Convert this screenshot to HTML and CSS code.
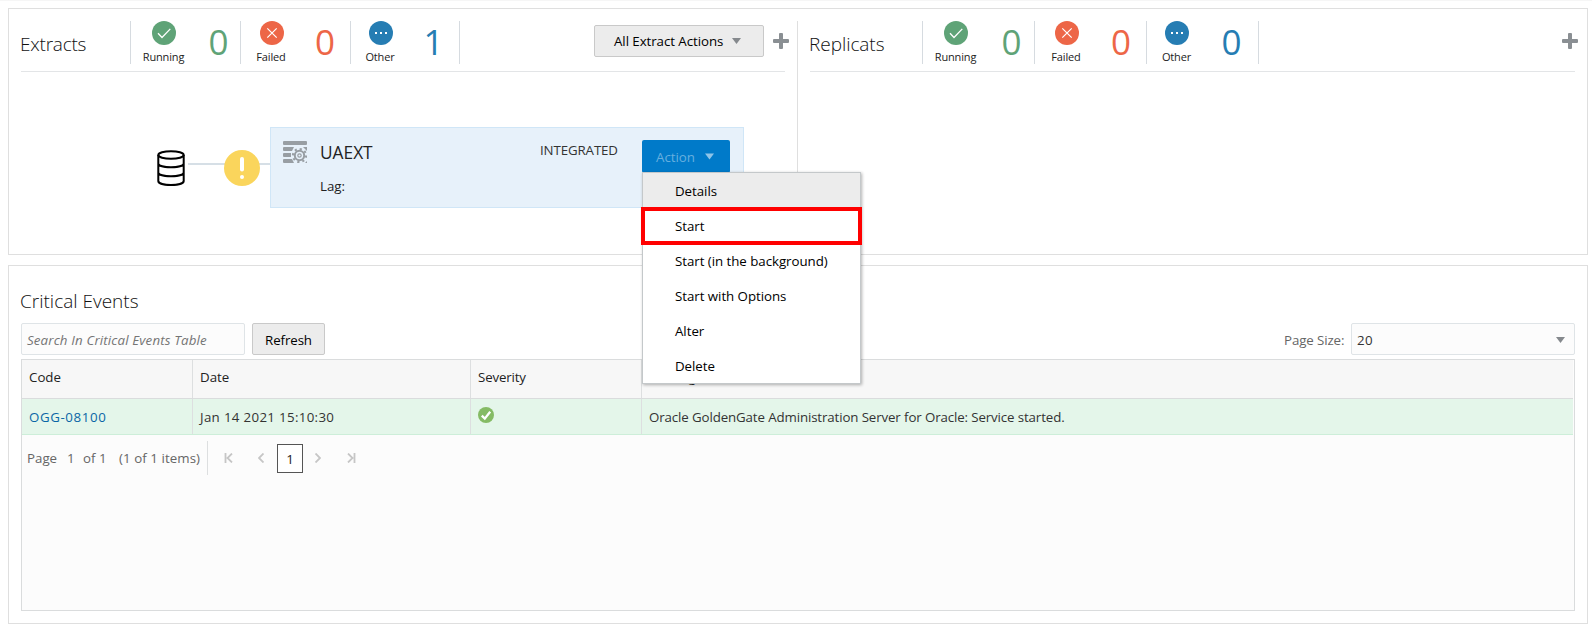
FILE: index.html
```html
<!DOCTYPE html>
<html lang="en">
<head>
<meta charset="utf-8">
<title>Administration Server</title>
<link rel="stylesheet" href="styles.css">
</head>
<body>
<svg class="defs" width="0" height="0">
  <symbol id="ok" viewBox="0 0 24 24"><circle cx="12" cy="12" r="12" fill="#5fa377"/><path d="M6 12.3l4 4.2 8.3-8.6" fill="none" stroke="#fff" stroke-width="1.3"/></symbol>
  <symbol id="fail" viewBox="0 0 24 24"><circle cx="12" cy="12" r="12" fill="#ed6647"/><path d="M7.3 7.3l9.4 9.4M16.7 7.3l-9.4 9.4" fill="none" stroke="#fff" stroke-width="1.2"/></symbol>
  <symbol id="other" viewBox="0 0 24 24"><circle cx="12" cy="12" r="12" fill="#267db3"/><path d="M6 11h2v2h-2zM11 11h2v2h-2zM16 11h2v2h-2z" fill="#fff"/></symbol>
  <symbol id="plus" viewBox="0 0 16 16"><path d="M7 0h2q1 0 1 1v5h5q1 0 1 1v2q0 1-1 1h-5v5q0 1-1 1h-2q-1 0-1-1v-5h-5q-1 0-1-1v-2q0-1 1-1h5v-5q0-1 1-1z" fill="#8a8f93"/></symbol>
  <symbol id="caret" viewBox="0 0 9 6"><path d="M0 0h9l-4.5 6z" fill="currentColor"/></symbol>
</svg>

<section class="box processes">
  <div class="panel extracts">
    <header class="panel-head">
      <h2 class="title"><span class="t-extracts">Extracts</span></h2>
      <div class="stats">
        <div class="stat running"><div class="kind"><svg><use href="#ok"/></svg><span class="l-run">Running</span></div><b>0</b></div>
        <div class="stat failed"><div class="kind"><svg><use href="#fail"/></svg><span class="l-fail">Failed</span></div><b>0</b></div>
        <div class="stat other"><div class="kind"><svg><use href="#other"/></svg><span class="l-other">Other</span></div><b>1</b></div>
      </div>
      <div class="tools">
        <button class="btn all-actions"><span>All Extract Actions</span><svg class="caret"><use href="#caret"/></svg></button>
        <svg class="plus"><use href="#plus"/></svg>
      </div>
    </header>
    <div class="flow">
      <svg class="source" width="114" height="81" viewBox="156 127 114 81">
        <path d="M188 164h82" stroke="#d6dfe6" stroke-width="2"/>
        <g fill="none" stroke="#000" stroke-width="2">
          <ellipse cx="171" cy="155" rx="12.7" ry="3.8"/>
          <path d="M158.300 155v26c0 5.300 25.400 5.300 25.400 0v-26M158.300 163.500c0 5 25.400 5 25.400 0M158.300 172.500c0 5 25.400 5 25.400 0"/>
        </g>
        <circle cx="242" cy="168" r="18" fill="#fad55c"/>
        <path d="M242 159v10.500" stroke="#fff" stroke-width="4" stroke-linecap="round"/>
        <circle cx="242" cy="177" r="2" fill="#fff"/>
      </svg>
      <article class="card">
        <svg class="proc" width="24" height="23" viewBox="0 0 24 23">
          <g fill="#989ea3"><rect width="24" height="4" rx="1"/><path d="M0 7q0-1 1-1h10l-2 4h-8q-1 0-1-1zM0 13q0-1 1-1h7v4h-7q-1 0-1-1zM0 19q0-1 1-1h8l2 4h-10q-1 0-1-1z"/><path d="M20 6h4v4zM22 22h2v-2z"/></g>
          <circle cx="16.500" cy="14.500" r="4.700" fill="none" stroke="#989ea3" stroke-width="2"/>
          <circle cx="16.500" cy="14.500" r="6.600" fill="none" stroke="#989ea3" stroke-width="2" stroke-dasharray="2.200 2.984"/>
          <circle cx="16.500" cy="14.500" r="1.700" fill="none" stroke="#989ea3" stroke-width="1.200"/>
        </svg>
        <div class="info"><div class="name">UAEXT</div><div class="lag">Lag:</div></div>
        <div class="type"><span>INTEGRATED</span></div>
        <div class="action">
          <button class="action-btn"><span>Action</span><svg class="caret"><use href="#caret"/></svg></button>
          <ul class="menu">
            <li class="hover"><span class="m1">Details</span></li>
            <li class="marked"><span class="m2">Start</span></li>
            <li><span class="m3">Start (in the background)</span></li>
            <li><span class="m4">Start with Options</span></li>
            <li><span class="m5">Alter</span></li>
            <li><span class="m6">Delete</span></li>
          </ul>
        </div>
      </article>
    </div>
  </div>
  <div class="panel replicats">
    <header class="panel-head">
      <h2 class="title"><span class="t-replicats">Replicats</span></h2>
      <div class="stats">
        <div class="stat running"><div class="kind"><svg><use href="#ok"/></svg><span class="l-run">Running</span></div><b>0</b></div>
        <div class="stat failed"><div class="kind"><svg><use href="#fail"/></svg><span class="l-fail">Failed</span></div><b>0</b></div>
        <div class="stat other"><div class="kind"><svg><use href="#other"/></svg><span class="l-other">Other</span></div><b>0</b></div>
      </div>
      <div class="tools"><svg class="plus"><use href="#plus"/></svg></div>
    </header>
  </div>
</section>

<section class="box events">
  <h2 class="events-title"><span class="t-events">Critical Events</span></h2>
  <div class="toolbar">
    <div class="search"><span>Search In Critical Events Table</span></div>
    <button class="btn refresh"><span>Refresh</span></button>
    <div class="size-label"><span>Page Size:</span></div>
    <div class="select"><span>20</span><svg class="caret"><use href="#caret"/></svg></div>
  </div>
  <div class="table">
    <div class="row head"><div><span class="h1">Code</span></div><div><span class="h2">Date</span></div><div><span class="h3">Severity</span></div><div><span>Message</span></div></div>
    <div class="row data">
      <div><a class="d1">OGG-08100</a></div>
      <div><span class="d2">Jan 14 2021 15:10:30</span></div>
      <div><svg class="sev" width="16" height="16" viewBox="0 0 16 16"><circle cx="8" cy="8" r="8" fill="#85bb65"/><path d="M3.800 8.600l3 3 5.400-6.900" fill="none" stroke="#fff" stroke-width="2.300"/></svg></div>
      <div><span class="d4">Oracle GoldenGate Administration Server for Oracle: Service started.</span></div>
    </div>
    <div class="pager">
      <div class="summary"><span class="p1">Page</span><span class="p2">1</span><span class="p3">of 1</span><span class="p4">(1 of 1 items)</span></div>
      <svg class="nav first" width="10" height="10" viewBox="0 0 10 10"><path d="M1.500 0v10M8 .5L3.500 5 8 9.500"/></svg>
      <svg class="nav prev" width="6" height="10" viewBox="0 0 6 10"><path d="M5.500 .5L1 5l4.500 4.500"/></svg>
      <div class="current">1</div>
      <svg class="nav next" width="6" height="10" viewBox="0 0 6 10"><path d="M.5 .5L5 5 .5 9.500"/></svg>
      <svg class="nav last" width="9" height="10" viewBox="0 0 9 10"><path d="M7.500 0v10M1 .5L5.500 5 1 9.500"/></svg>
    </div>
  </div>
</section>
</body>
</html>
```
FILE: styles.css
```css
*, *::after { box-sizing: border-box; }
body { margin: 0; padding: 7px 4px 0 8px; border-top: 1px solid #f6f6f6; background: #fff; color: #333; font: 13.3px/18px "Open Sans", "Noto Sans", sans-serif; height: 629px; overflow: hidden; }
.defs { position: absolute; }
svg { display: block; flex: none; }
span, a { white-space: nowrap; }
h2 { margin: 0 0 0 -1px; font-size: 19px; line-height: 26px; font-weight: 300; color: #111; }
button { font: inherit; margin: 0; padding: 0; }
.box { border: 1px solid #dfdfdf; background: #fff; }

.processes { display: grid; grid-template-columns: 788px 1fr; height: 247px; }
.panel { padding: 12px 12px 0; }
.replicats { margin-top: 12px; padding-top: 0; padding-left: 12px; border-left: 1px solid #dfdfdf; }
.panel-head { display: flex; height: 51px; border-bottom: 1px solid #e3e5e7; }
.title { padding-top: 10px; }
.extracts .title { width: 110px; letter-spacing: -.22px; }
.replicats .title { width: 113px; letter-spacing: -.05px; }
.stats { display: flex; height: 43px; border-right: 1px solid #d6dbe0; }
.stat { display: grid; border-left: 1px solid #d6dbe0; }
.extracts .running { grid-template-columns: 66px 43px; }
.extracts .failed { grid-template-columns: 61px 48px; }
.extracts .other { grid-template-columns: 59px 49px; }
.replicats .running { grid-template-columns: 66px 45px; }
.replicats .failed { grid-template-columns: 63px 48px; }
.replicats .other { grid-template-columns: 60px 51px; }
.kind { display: flex; flex-direction: column; align-items: center; font-size: 11px; line-height: 16px; color: #222; }
.kind span { letter-spacing: -.15px; position: relative; left: -.5px; }
.kind svg { width: 24px; height: 24px; margin-bottom: 4px; }
.stat b { font-weight: 400; font-size: 35px; line-height: 42px; text-align: center; font-family: "Open Sans", sans-serif; }
.failed b, .other b { padding-right: 2px; }
.running b { color: #5fa377; }
.failed b { color: #ed6647; }
.other b { color: #267db3; }
.tools { display: flex; margin-left: auto; }
.extracts .tools { margin-right: -4px; }
.replicats .tools { margin-right: -3px; }
.plus { width: 16px; height: 16px; margin-top: 12px; }
.btn { display: flex; align-items: center; height: 32px; border: 1px solid #c9c9c9; border-radius: 2px; background: #ececec; color: #000; }
.all-actions { width: 170px; margin: 4px 9px 0 0; padding-left: 19px; letter-spacing: -.06px; }
.all-actions .caret { margin-left: auto; margin-right: 22px; }
.caret { width: 9px; height: 6px; color: #85898d; }

.flow { display: flex; padding: 55px 0 0 135px; }
.card { display: flex; width: 474px; height: 81px; border: 1px solid #d0e6f7; background: #e7f1fa; padding: 12px; }
.proc { margin-top: 1px; }
.info { margin-left: 13px; width: 220px; color: #222; }
.name { padding-top: 1px; font-size: 17.3px; line-height: 24px; }
.lag { margin-top: 12px; }
.type { width: 102px; padding-top: 1px; letter-spacing: -.12px; }
.action { position: relative; width: 88px; }
.action-btn { display: flex; align-items: center; width: 88px; height: 33px; padding-left: 14px; border: 0; border-radius: 2px; background: #007ac9; color: #66afdf; }
.action-btn .caret { width: 9px; height: 7px; margin-left: auto; margin-right: 16px; color: #8fc4e8; }
.menu { position: absolute; z-index: 2; left: 0; top: 32px; width: 219px; margin: 0; padding: 0; list-style: none; background: #fff; border: 1px solid #c4c8ca; box-shadow: 1px 1px 3px rgba(0,0,0,.3); color: #000; letter-spacing: -.04px; }
.menu li { height: 35px; padding: 9px 0 0 32px; }
.menu .hover { background: #ececec; }
.menu .marked { position: relative; }
.marked::after { content: ""; position: absolute; left: -2px; top: -1px; width: 221px; height: 38px; border: 4px solid #f00; }

.events { margin-top: 10px; height: 359px; padding: 22px 12px 0; }
.toolbar { display: flex; height: 32px; margin-top: 9px; }
.search { width: 224px; padding: 7px 5px; border: 1px solid #dfe4e7; border-radius: 2px; background: #fcfcfc; color: #757575; font-style: italic; letter-spacing: .15px; }
.refresh { width: 73px; margin-left: 7px; padding: 1px 0 0; justify-content: center; letter-spacing: -.1px; }
.size-label { margin-left: auto; width: 67px; padding-top: 8px; color: #666; letter-spacing: -.1px; }
.select { display: flex; align-items: center; justify-content: space-between; width: 224px; padding: 1px 9px 0 5px; border: 1px solid #dfe4e7; border-radius: 2px; background: #fcfcfc; letter-spacing: .3px; }
.table { margin-top: 4px; height: 252px; border: 1px solid #dadcdd; background: #fcfcfc; }
.row { display: grid; grid-template-columns: 171px 278px 171px 1fr; margin-right: 1px; }
.row > div { border-right: 1px solid #dddfe0; padding-left: 7px; }
.row > div:last-child { border-right: 0; }
.head { height: 39px; background: #f7f7f7; border-bottom: 1px solid #dadcdd; color: #222; }
.head > div { padding-top: 8px; }
.h3 { letter-spacing: -.15px; }
.data { height: 36px; background: #e4f6ea; border-bottom: 1px solid #cdeed9; }
.data > div { padding-top: 9px; }
.data a { color: #0a66a6; letter-spacing: .6px; }
.d2 { letter-spacing: .33px; }
.d4 { letter-spacing: -.12px; }
.sev { margin-top: -1px; }
.pager { display: flex; align-items: center; margin-top: 5px; height: 35px; color: #666; }
.summary { display: flex; align-items: center; width: 186px; height: 34px; padding-left: 5px; border-right: 1px solid #dddfe0; }
.p1 { width: 40px; } .p2 { width: 16px; } .p3 { width: 36px; } .p4 { letter-spacing: .07px; }
.nav { fill: none; stroke: #c6c6c6; stroke-width: 1.8; }
.first { margin-left: 16px; }
.prev { margin-left: 24px; }
.current { width: 26px; height: 29px; margin: 2px 0 0 13px; border: 1px solid #555; background: #fff; color: #222; text-align: center; line-height: 28px; }
.next { margin-left: 12px; }
.last { margin-left: 26px; }
```
